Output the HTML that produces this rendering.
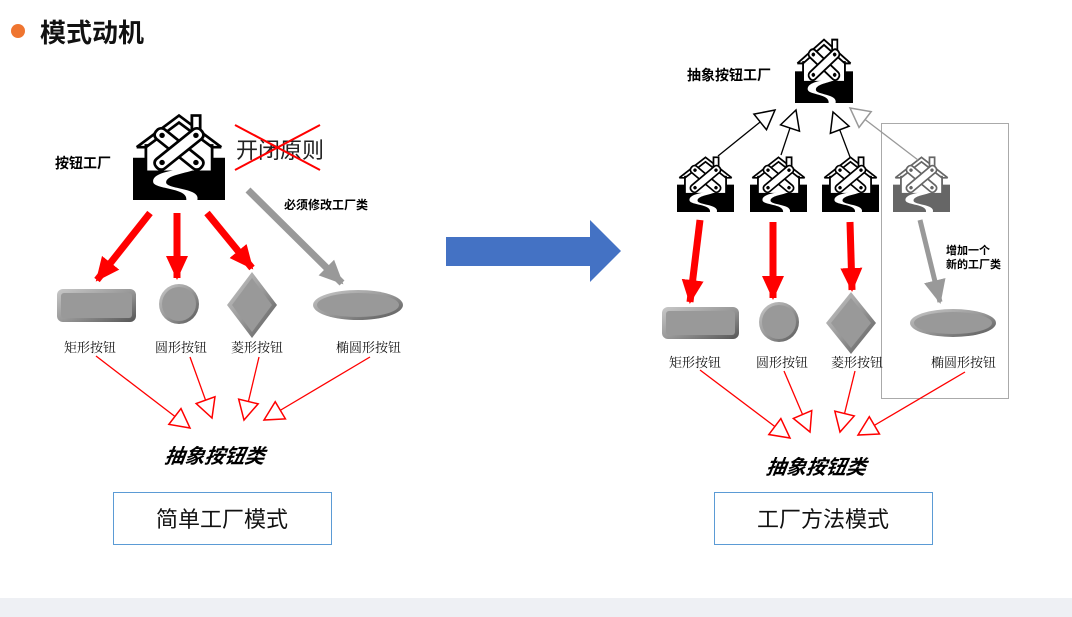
<!DOCTYPE html>
<html><head><meta charset="utf-8">
<style>
html,body{margin:0;padding:0;background:#fff;}
body{width:1072px;height:617px;overflow:hidden;position:relative;font-family:"Liberation Sans","Noto Sans CJK SC",sans-serif;}
</style></head><body>
<svg width="1072" height="617" viewBox="0 0 1072 617" xmlns="http://www.w3.org/2000/svg" style="position:absolute;left:0;top:0">
<defs>
<symbol id="house" viewBox="0 0 100 100" preserveAspectRatio="none">
  <rect x="0" y="52" width="100" height="48" fill="currentColor"/>
  <path d="M4,40 L50,4 L96,40" fill="none" stroke="currentColor" stroke-width="3"/>
  <path d="M4,40 L14,40 L14,68 L86,68 L86,40 L96,40" fill="none" stroke="currentColor" stroke-width="3"/>
  <rect x="14" y="38" width="72" height="30" fill="#fff" stroke="currentColor" stroke-width="3"/>
  <path d="M14,40 L50,12 L86,40" fill="#fff" stroke="currentColor" stroke-width="3"/>
  <rect x="64" y="4" width="9" height="18" fill="#fff" stroke="currentColor" stroke-width="3"/>
  <g transform="rotate(40 50 42)"><rect x="18" y="35" width="64" height="14" rx="6" fill="#fff" stroke="currentColor" stroke-width="3"/><circle cx="26" cy="42" r="3" fill="currentColor"/><circle cx="74" cy="42" r="3" fill="currentColor"/></g>
  <g transform="rotate(-40 50 42)"><rect x="18" y="35" width="64" height="14" rx="6" fill="#fff" stroke="currentColor" stroke-width="3"/><circle cx="26" cy="42" r="3" fill="currentColor"/><circle cx="74" cy="42" r="3" fill="currentColor"/></g>
  <path d="M62,64 C40,66 20,70 22,80 C24,88 60,86 58,100 L70,100 C74,86 36,88 36,80 C36,72 55,70 66,66 Z" fill="#fff"/>
</symbol>
<marker id="rh" markerWidth="26" markerHeight="26" refX="22" refY="13" orient="auto" markerUnits="userSpaceOnUse"><path d="M0,2 L24,13 L0,24 Z" fill="#f00"/></marker>
<marker id="gh" markerWidth="26" markerHeight="26" refX="22" refY="13" orient="auto" markerUnits="userSpaceOnUse"><path d="M0,2 L24,13 L0,24 Z" fill="#999"/></marker>
<marker id="ht" markerWidth="24" markerHeight="24" refX="20" refY="12" orient="auto" markerUnits="userSpaceOnUse"><path d="M1,2 L20,12 L1,22 Z" fill="#fff" stroke="#f00" stroke-width="1.5"/></marker>
<marker id="bt" markerWidth="24" markerHeight="24" refX="20" refY="12" orient="auto" markerUnits="userSpaceOnUse"><path d="M1,2 L20,12 L1,22 Z" fill="#fff" stroke="#000" stroke-width="1.5"/></marker>
<marker id="gt" markerWidth="24" markerHeight="24" refX="20" refY="12" orient="auto" markerUnits="userSpaceOnUse"><path d="M1,2 L20,12 L1,22 Z" fill="#fff" stroke="#999" stroke-width="1.5"/></marker>
<linearGradient id="sg" x1="0" y1="0" x2="1" y2="1"><stop offset="0" stop-color="#c8c8c8"/><stop offset="0.5" stop-color="#999"/><stop offset="1" stop-color="#555"/></linearGradient>
</defs>

<!-- title -->
<circle cx="18" cy="31" r="7" fill="#ef7530"/>
<text x="40" y="42" font-size="26" font-weight="bold" fill="#111">模式动机</text>

<!-- LEFT -->
<use href="#house" x="133" y="112" width="92" height="88" color="#000"/>
<text x="55" y="168" font-size="14" font-weight="bold">按钮工厂</text>
<text x="236" y="158" font-size="22" fill="#222">开闭原则</text>
<line x1="235" y1="125" x2="320" y2="170" stroke="#f00" stroke-width="2"/>
<line x1="235" y1="170" x2="320" y2="125" stroke="#f00" stroke-width="2"/>
<text x="284" y="209" font-size="12" font-weight="bold">必须修改工厂类</text>

<line x1="150" y1="213" x2="97" y2="280" stroke="#f00" stroke-width="7" marker-end="url(#rh)"/>
<line x1="177" y1="213" x2="177" y2="278" stroke="#f00" stroke-width="7" marker-end="url(#rh)"/>
<line x1="207" y1="213" x2="252" y2="268" stroke="#f00" stroke-width="7" marker-end="url(#rh)"/>
<line x1="248" y1="190" x2="342" y2="283" stroke="#999" stroke-width="7" marker-end="url(#gh)"/>

<rect x="57" y="289" width="79" height="33" rx="6" fill="url(#sg)"/>
<rect x="61" y="293" width="71" height="25" rx="3" fill="#999"/>
<circle cx="179" cy="304" r="20" fill="url(#sg)"/><circle cx="179" cy="304" r="17" fill="#999"/>
<path d="M252,272 L277,305 L252,338 L227,305 Z" fill="url(#sg)"/><path d="M252,278 L272,305 L252,332 L232,305 Z" fill="#999"/>
<ellipse cx="358" cy="305" rx="45" ry="15" fill="url(#sg)"/><ellipse cx="358" cy="305" rx="41" ry="12" fill="#999"/>

<g font-family="'Liberation Serif','Noto Serif CJK SC',serif" font-size="13" fill="#111">
<text x="64" y="352">矩形按钮</text><text x="155" y="352">圆形按钮</text><text x="231" y="352">菱形按钮</text><text x="336" y="352">椭圆形按钮</text>
</g>
<g stroke="#f00" stroke-width="1.3" fill="none">
<line x1="96" y1="356" x2="190" y2="428" marker-end="url(#ht)"/>
<line x1="190" y1="357" x2="212" y2="418" marker-end="url(#ht)"/>
<line x1="259" y1="357" x2="244" y2="420" marker-end="url(#ht)"/>
<line x1="370" y1="357" x2="264" y2="420" marker-end="url(#ht)"/>
</g>
<text x="165" y="463" font-size="20" font-weight="bold" font-style="italic" transform="skewX(-8) translate(64,0)">抽象按钮类</text>

<rect x="113.5" y="492.5" width="218" height="52" fill="#fff" stroke="#5b9bd5"/>
<text x="222" y="527" font-size="22" text-anchor="middle" fill="#111">简单工厂模式</text>

<!-- big blue arrow -->
<path d="M446,237 L590,237 L590,220 L621,251 L590,282 L590,266 L446,266 Z" fill="#4472c4"/>

<!-- RIGHT -->
<rect x="881.5" y="123.5" width="127" height="275" fill="none" stroke="#aaa"/>
<use href="#house" x="795" y="37" width="58" height="66" color="#000"/>
<text x="687" y="80" font-size="14" font-weight="bold">抽象按钮工厂</text>
<use href="#house" x="677" y="155" width="57" height="57" color="#000"/>
<use href="#house" x="750" y="155" width="57" height="57" color="#000"/>
<use href="#house" x="822" y="155" width="57" height="57" color="#000"/>
<use href="#house" x="893" y="155" width="57" height="57" color="#666"/>

<line x1="718" y1="156" x2="775" y2="110" stroke="#000" stroke-width="1.3" marker-end="url(#bt)"/>
<line x1="781" y1="155" x2="796" y2="110" stroke="#000" stroke-width="1.3" marker-end="url(#bt)"/>
<line x1="850" y1="157" x2="833" y2="112" stroke="#000" stroke-width="1.3" marker-end="url(#bt)"/>
<line x1="918" y1="160" x2="850" y2="108" stroke="#999" stroke-width="1.3" marker-end="url(#gt)"/>

<line x1="700" y1="220" x2="690" y2="302" stroke="#f00" stroke-width="7" marker-end="url(#rh)"/>
<line x1="773" y1="222" x2="773" y2="298" stroke="#f00" stroke-width="7" marker-end="url(#rh)"/>
<line x1="850" y1="222" x2="852" y2="290" stroke="#f00" stroke-width="7" marker-end="url(#rh)"/>
<line x1="920" y1="220" x2="940" y2="302" stroke="#999" stroke-width="5" marker-end="url(#gh)"/>
<text x="946" y="254" font-size="11" font-weight="bold">增加一个</text>
<text x="946" y="268" font-size="11" font-weight="bold">新的工厂类</text>

<rect x="662" y="307" width="77" height="32" rx="6" fill="url(#sg)"/><rect x="666" y="311" width="69" height="24" rx="3" fill="#999"/>
<circle cx="779" cy="322" r="20" fill="url(#sg)"/><circle cx="779" cy="322" r="17" fill="#999"/>
<path d="M851,292 L876,323 L851,354 L826,323 Z" fill="url(#sg)"/><path d="M851,298 L871,323 L851,348 L831,323 Z" fill="#999"/>
<ellipse cx="953" cy="323" rx="43" ry="14" fill="url(#sg)"/><ellipse cx="953" cy="323" rx="39" ry="11" fill="#999"/>
<g font-family="'Liberation Serif','Noto Serif CJK SC',serif" font-size="13" fill="#111">
<text x="669" y="367">矩形按钮</text><text x="756" y="367">圆形按钮</text><text x="831" y="367">菱形按钮</text><text x="931" y="367">椭圆形按钮</text>
</g>
<g stroke="#f00" stroke-width="1.3" fill="none">
<line x1="700" y1="370" x2="790" y2="438" marker-end="url(#ht)"/>
<line x1="784" y1="371" x2="810" y2="432" marker-end="url(#ht)"/>
<line x1="855" y1="371" x2="840" y2="432" marker-end="url(#ht)"/>
<line x1="965" y1="372" x2="858" y2="435" marker-end="url(#ht)"/>
</g>
<text x="766" y="474" font-size="20" font-weight="bold" font-style="italic" transform="skewX(-8) translate(66,0)">抽象按钮类</text>

<rect x="714.5" y="492.5" width="218" height="52" fill="#fff" stroke="#5b9bd5"/>
<text x="823" y="527" font-size="22" text-anchor="middle" fill="#111">工厂方法模式</text>

<rect x="0" y="598" width="1072" height="19" fill="#eef0f4"/>
</svg>
</body></html>
